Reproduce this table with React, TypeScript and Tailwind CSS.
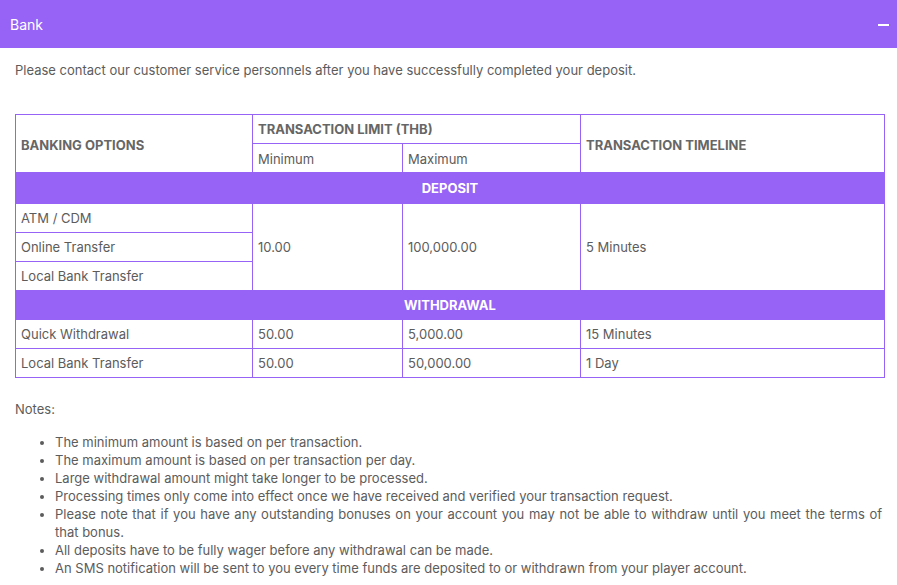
const cell = 'border border-[#9763f6] px-[5px] align-middle font-normal text-left';

const notes = [
  'The minimum amount is based on per transaction.',
  'The maximum amount is based on per transaction per day.',
  'Large withdrawal amount might take longer to be processed.',
  'Processing times only come into effect once we have received and verified your transaction request.',
  'Please note that if you have any outstanding bonuses on your account you may not be able to withdraw until you meet the terms of that bonus.',
  'All deposits have to be fully wager before any withdrawal can be made.',
  'An SMS notification will be sent to you every time funds are deposited to or withdrawn from your player account.',
];

export default function App() {
  return (
    <div className="w-[897px] min-h-[585px] bg-white font-['Inter',sans-serif] text-[13px] text-[#5c5c5c]">
      {/* Header */}
      <div className="h-12 bg-[#9763f6] flex items-center justify-between pl-[10px] pr-2 pt-[2px]">
        <span className="text-white text-sm">Bank</span>
        <span className="w-[11px] h-[2px] bg-white" />
      </div>

      <div className="px-[15px] pt-[13px]">
        <p className="leading-[18px]">
          Please contact our customer service personnels after you have successfully completed your deposit.
        </p>

        <table className="mt-[35px] w-[870px] border-collapse leading-[18px]">
          <colgroup>
            <col className="w-[237px]" />
            <col className="w-[150px]" />
            <col className="w-[178px]" />
            <col />
          </colgroup>
          <thead>
            <tr className="h-[29px]">
              <th rowSpan={2} className={`${cell} !font-bold pt-[2px] text-[#666]`}>BANKING OPTIONS</th>
              <th colSpan={2} className={`${cell} !font-bold text-[#666]`}>TRANSACTION LIMIT (THB)</th>
              <th rowSpan={2} className={`${cell} !font-bold pt-[2px] text-[#666]`}>TRANSACTION TIMELINE</th>
            </tr>
            <tr className="h-[29px]">
              <th className={`${cell} pt-[2px]`}>Minimum</th>
              <th className={`${cell} pt-[2px]`}>Maximum</th>
            </tr>
          </thead>
          <tbody>
            <tr className="h-[31px] bg-[#9763f6]">
              <td colSpan={4} className="border border-[#9763f6] text-center text-white font-bold">DEPOSIT</td>
            </tr>
            <tr className="h-[29px]">
              <td className={cell}>ATM / CDM</td>
              <td rowSpan={3} className={cell}>10.00</td>
              <td rowSpan={3} className={cell}>100,000.00</td>
              <td rowSpan={3} className={cell}>5 Minutes</td>
            </tr>
            <tr className="h-[29px]">
              <td className={cell}>Online Transfer</td>
            </tr>
            <tr className="h-[29px]">
              <td className={cell}>Local Bank Transfer</td>
            </tr>
            <tr className="h-[29px] bg-[#9763f6]">
              <td colSpan={4} className="border border-[#9763f6] text-center text-white font-bold">WITHDRAWAL</td>
            </tr>
            <tr className="h-[29px]">
              <td className={cell}>Quick Withdrawal</td>
              <td className={cell}>50.00</td>
              <td className={cell}>5,000.00</td>
              <td className={cell}>15 Minutes</td>
            </tr>
            <tr className="h-[29px]">
              <td className={cell}>Local Bank Transfer</td>
              <td className={cell}>50.00</td>
              <td className={cell}>50,000.00</td>
              <td className={cell}>1 Day</td>
            </tr>
          </tbody>
        </table>

        <p className="mt-[22px] leading-[18px]">Notes:</p>

        <ul className="mt-[15px] list-disc pl-10 leading-[18px] text-justify">
          {notes.map((n) => (
            <li key={n}>{n}</li>
          ))}
        </ul>
      </div>
    </div>
  );
}
